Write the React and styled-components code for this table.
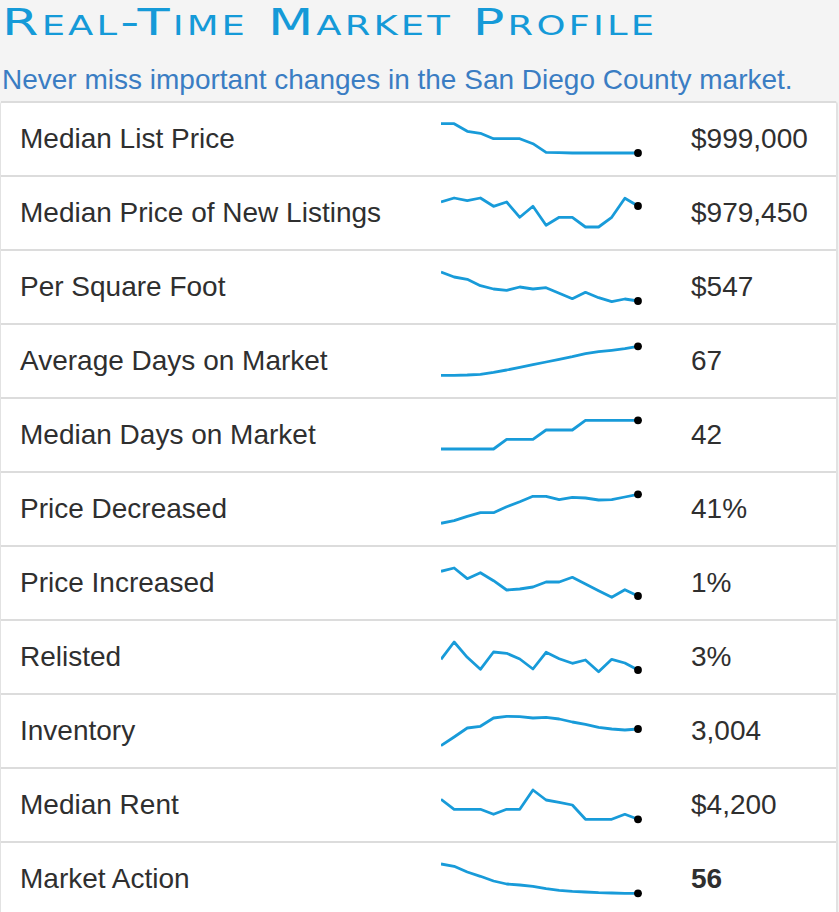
import React from 'react';
import styled, { createGlobalStyle } from 'styled-components';

const GlobalStyle = createGlobalStyle`
  body {
    margin: 0;
    background: #f4f4f4;
    font-family: "Liberation Sans", Arial, sans-serif;
  }
`

const Page = styled.div`
  width: 839px;
  overflow: hidden;
`

const Header = styled.header`
  padding: 3px 0 0 2px;
`

// wide, copperplate-like small caps
const Title = styled.h1`
  margin: 0;
  font-family: "DejaVu Sans", sans-serif;
  font-weight: normal;
  font-variant: small-caps;
  font-size: 37px;
  line-height: 40px;
  letter-spacing: 2.2px;
  color: #159ad8;
  white-space: nowrap;
  transform: scaleX(1.42);
  transform-origin: left center;
`

const Subtitle = styled.p`
  margin: 22px 0 0 0;
  font-size: 28px;
  line-height: 30px;
  color: #3a7dc3;
  white-space: nowrap;
`

const Table = styled.div`
  margin-top: 6px;
  width: 835px;
  background: #fff;
  border-left: 1px solid #e2e2e2;
  border-right: 2px solid #e2e2e2;
  border-radius: 4px 4px 0 0;
`

const Row = styled.div`
  display: grid;
  grid-template-columns: 440px 250px 1fr;
  align-items: center;
  height: 72px;
  border-top: 2px solid #dcdcdc;
  color: #2f2f2f;
  font-size: 28px;
`

const Label = styled.div`
  padding-left: 19px;
  white-space: nowrap;
`

const Value = styled.div`
  font-weight: ${p => (p.$bold ? 'bold' : 'normal')};
  white-space: nowrap;
`

const Spark = styled.svg`
  display: block;
  width: 250px;
  height: 72px;
`

const rows = [
  { label: 'Median List Price', value: '$999,000', data: [22.7, 22.7, 30.3, 32.3, 37.7, 37.7, 37.7, 42.7, 51.3, 51.7, 52, 52, 52, 52, 52, 52] },
  { label: 'Median Price of New Listings', value: '$979,450', data: [27, 23, 25.7, 23, 31.3, 27, 42.3, 31.3, 50.3, 42.3, 42.3, 52, 52, 42.3, 23.3, 31] },
  { label: 'Per Square Foot', value: '$547', data: [23, 28, 30.3, 36.7, 40, 41.3, 38, 40, 38.7, 44.3, 49.7, 43.3, 48.7, 52.7, 50, 52] },
  { label: 'Average Days on Market', value: '67', data: [52.3, 52.3, 52, 51.3, 49.3, 47, 44.3, 41.7, 39, 36.3, 33.7, 30.7, 28.7, 27.3, 25.7, 23.3] },
  { label: 'Median Days on Market', value: '42', data: [52, 52, 52, 52, 52, 42.3, 42.3, 42.3, 33, 33, 33, 23.3, 23.3, 23.3, 23.3, 23.3] },
  { label: 'Price Decreased', value: '41%', data: [52.3, 49.7, 45.3, 41.7, 41.7, 35.7, 30.7, 25.3, 25.3, 28.7, 26.3, 27, 29, 28.7, 26, 23.3] },
  { label: 'Price Increased', value: '1%', data: [26.3, 23, 33.7, 27.7, 35.7, 45, 44, 42, 37, 37, 32.3, 39, 45.7, 52.3, 44.7, 51] },
  { label: 'Relisted', value: '3%', data: [40.3, 23, 38.3, 50.3, 33, 34.3, 40, 50, 33.3, 39.7, 44.3, 41, 52.7, 40.3, 44, 51] },
  { label: 'Inventory', value: '3,004', data: [52.7, 44, 35, 33.3, 25, 23.3, 23.7, 25, 24.3, 26, 29, 31.3, 34.3, 36, 37, 36] },
  { label: 'Median Rent', value: '$4,200', data: [32.3, 42.3, 42.3, 42.3, 47.3, 42.3, 42.3, 23, 33, 35.3, 38, 52.3, 52.3, 52.3, 47.3, 52.3] },
  { label: 'Market Action', value: '56', bold: true, data: [23, 25.3, 31, 35.3, 40, 43, 44, 45.3, 47.7, 49.3, 50.3, 51, 51.7, 52, 52.3, 52.3] },
];

function Sparkline({ data }) {
  const step = 197 / (data.length - 1);
  const pts = data.map((y, i) => [i * step, y - 2]);
  const last = pts[pts.length - 1];
  return (
    <Spark viewBox="0 0 250 72">
      <polyline
        points={pts.map(p => p.join(',')).join(' ')}
        fill="none"
        stroke="#189bd9"
        strokeWidth="2.8"
        strokeLinejoin="round"
      />
      <circle cx={last[0]} cy={last[1]} r="3.9" fill="#000" />
    </Spark>
  );
}

export default function App() {
  return (
    <Page>
      <GlobalStyle />
      <Header>
        <Title>Real-Time Market Profile</Title>
        <Subtitle>Never miss important changes in the San Diego County market.</Subtitle>
      </Header>
      <Table>
        {rows.map(r => (
          <Row key={r.label}>
            <Label>{r.label}</Label>
            <Sparkline data={r.data} />
            <Value $bold={r.bold}>{r.value}</Value>
          </Row>
        ))}
      </Table>
    </Page>
  );
}
